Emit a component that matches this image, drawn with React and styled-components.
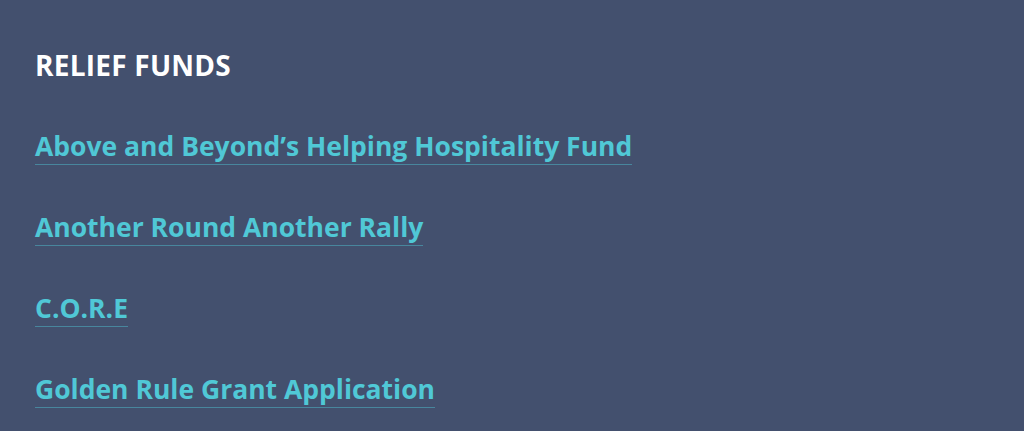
import React from "react";
import styled, { createGlobalStyle } from "styled-components";

const Global = createGlobalStyle`
  html, body {
    margin: 0;
    padding: 0;
    background: #43506e;
  }
  body {
    font-family: "Open Sans", "Noto Sans", sans-serif;
    -webkit-font-smoothing: antialiased;
  }
`;

const Section = styled.section`
  min-height: 431px;
  box-sizing: border-box;
  padding: 50px 35px 0;
  background: #43506e;
`;

const Heading = styled.h2`
  margin: 0 0 50px;
  font-size: 28px;
  line-height: 30px;
  font-weight: 700;
  letter-spacing: 0.25px;
  color: #ffffff;
`;

const FundList = styled.ul`
  list-style: none;
  margin: 0;
  padding: 0;
  display: flex;
  flex-direction: column;
  gap: 46px;
`;

const FundItem = styled.li`
  margin: 0;
`;

const FundLink = styled.a`
  display: inline-block;
  font-size: 26.5px;
  line-height: 32px;
  font-weight: 700;
  color: #50c8d6;
  text-decoration: none;
  border-bottom: 1px solid rgba(80, 200, 214, 0.45);
  padding-bottom: 2px;
`;

const funds = [
  "Above and Beyond’s Helping Hospitality Fund",
  "Another Round Another Rally",
  "C.O.R.E",
  "Golden Rule Grant Application",
];

export default function App() {
  return (
    <>
      <Global />
      <Section>
        <Heading>RELIEF FUNDS</Heading>
        <FundList>
          {funds.map((name) => (
            <FundItem key={name}>
              <FundLink href="#">{name}</FundLink>
            </FundItem>
          ))}
        </FundList>
      </Section>
    </>
  );
}
